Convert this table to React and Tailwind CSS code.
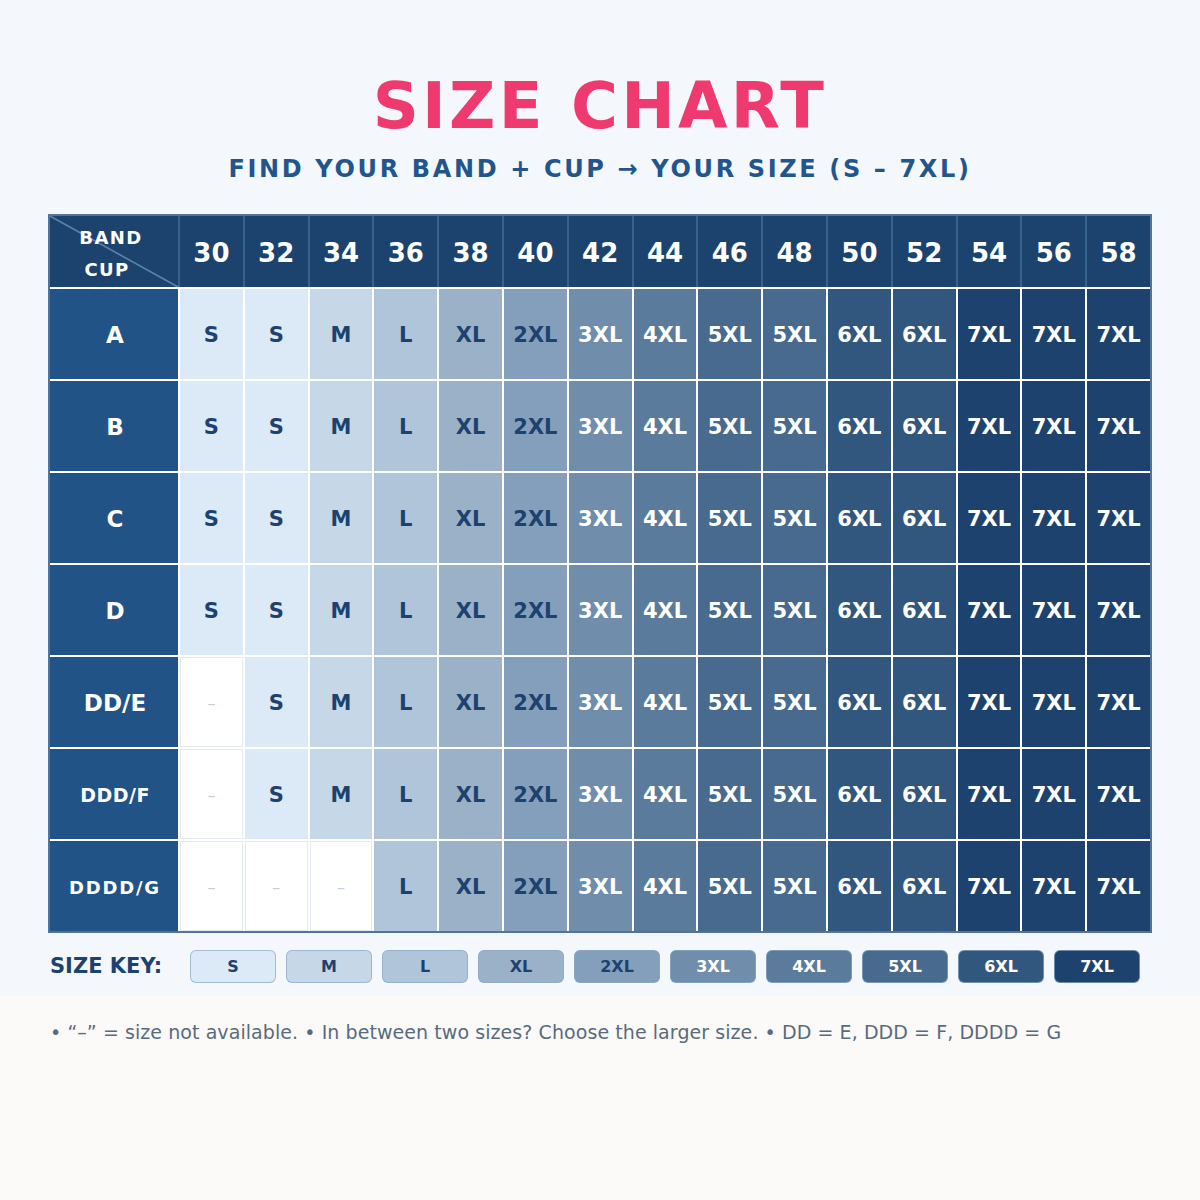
import React from 'react';

const BANDS = [30, 32, 34, 36, 38, 40, 42, 44, 46, 48, 50, 52, 54, 56, 58];
const BASE = ['S', 'S', 'M', 'L', 'XL', '2XL', '3XL', '4XL', '5XL', '5XL', '6XL', '6XL', '7XL', '7XL', '7XL'];

const SIZE_STYLES = {
  S: 'bg-[#dce9f6] text-[#1d426f]',
  M: 'bg-[#c6d7e7] text-[#1d426f]',
  L: 'bg-[#b0c5d9] text-[#1d426f]',
  XL: 'bg-[#9bb1c8] text-[#1d426f]',
  '2XL': 'bg-[#849fbb] text-[#1d426f]',
  '3XL': 'bg-[#708dab] text-white',
  '4XL': 'bg-[#5b7b9c] text-white',
  '5XL': 'bg-[#476a8e] text-white',
  '6XL': 'bg-[#32577f] text-white',
  '7XL': 'bg-[#1d426e] text-white',
};

const KEY = ['S', 'M', 'L', 'XL', '2XL', '3XL', '4XL', '5XL', '6XL', '7XL'];

// cup label + how many leading bands are unavailable
const CUPS = [
  { label: 'A', skip: 0, cls: 'text-[23px]' },
  { label: 'B', skip: 0, cls: 'text-[23px]' },
  { label: 'C', skip: 0, cls: 'text-[23px]' },
  { label: 'D', skip: 0, cls: 'text-[23px]' },
  { label: 'DD/E', skip: 1, cls: 'text-[23px]' },
  { label: 'DDD/F', skip: 1, cls: 'text-[19px] tracking-[0.5px]' },
  { label: 'DDDD/G', skip: 3, cls: 'text-[18px] tracking-[1.8px]' },
];

const App = () => {
  return (
    <div className="min-h-[1200px] bg-[#fbfaf8] font-['DejaVu_Sans',sans-serif]">
      <div className="bg-[#f4f8fc] px-12 pt-[74px] pb-[13px]">
        {/* Title */}
        <h1 className="text-center text-[64px] leading-none font-bold tracking-[0.05em] text-[#ef3a6f]">
          SIZE CHART
        </h1>
        <p className="mt-[19px] text-center text-[24px] leading-none font-bold tracking-[0.11em] text-[#22558c]">
          FIND YOUR BAND + CUP → YOUR SIZE (S – 7XL)
        </p>

        {/* Chart */}
        <div className="mt-[33px] border-2 border-[#52739a] bg-white">
          <div className="grid h-[73px] grid-cols-[128px_repeat(15,minmax(0,1fr))] gap-x-[2px] border-b-2 border-white bg-[#35628f]">
            <div className="relative flex flex-col items-center justify-center bg-[#1c426e] pt-1 text-[18px] leading-[32px] font-bold tracking-[1.4px] text-white">
              <svg className="absolute inset-0 h-full w-full" preserveAspectRatio="none" viewBox="0 0 100 100">
                <line x1="0" y1="0" x2="100" y2="100" stroke="#5d82ab" strokeWidth="1.6" vectorEffect="non-scaling-stroke" />
              </svg>
              <span className="relative -ml-[6px]">BAND</span>
              <span className="relative -ml-[14px]">CUP</span>
            </div>
            {BANDS.map((b) => (
              <div key={b} className="flex items-center justify-center bg-[#1c426e] pt-[3px] text-[26px] font-bold text-white">
                {b}
              </div>
            ))}
          </div>

          <div className="grid grid-cols-[128px_repeat(15,minmax(0,1fr))] gap-[2px] bg-white">
            {CUPS.map((cup) => (
              <React.Fragment key={cup.label}>
                <div className={`flex h-[90px] items-center justify-center bg-[#215387] pt-[2px] pl-[2px] font-bold text-white ${cup.cls}`}>
                  {cup.label}
                </div>
                {BASE.map((size, i) =>
                  i < cup.skip ? (
                    <div
                      key={i}
                      className="flex items-center justify-center bg-white pt-[3px] text-[16px] text-[#c3cfdc] shadow-[inset_0_0_0_1px_#e3eaf2]"
                    >
                      –
                    </div>
                  ) : (
                    <div key={i} className={`flex items-center justify-center pt-[3px] text-[21px] font-bold ${SIZE_STYLES[size]}`}>
                      {size}
                    </div>
                  )
                )}
              </React.Fragment>
            ))}
          </div>
        </div>

        {/* Size key */}
        <div className="mt-[17px] flex items-center pl-[2px]">
          <span className="w-[140px] text-[21px] font-bold text-[#1d426f]">SIZE KEY:</span>
          <div className="flex gap-[10px]">
            {KEY.map((k) => (
              <div
                key={k}
                className={`flex h-[33px] w-[86px] items-center justify-center rounded-md border-[1.5px] border-[#8aa8c8]/70 text-[16px] font-bold ${SIZE_STYLES[k]}`}
              >
                {k}
              </div>
            ))}
          </div>
        </div>
      </div>

      {/* Notes */}
      <p className="px-[50px] pt-[22px] text-[19px] tracking-[0.07px] text-[#5a6a7e]">
        • “–” = size not available. • In between two sizes? Choose the larger size. • DD = E, DDD = F, DDDD = G
      </p>
    </div>
  );
};

export default App;
